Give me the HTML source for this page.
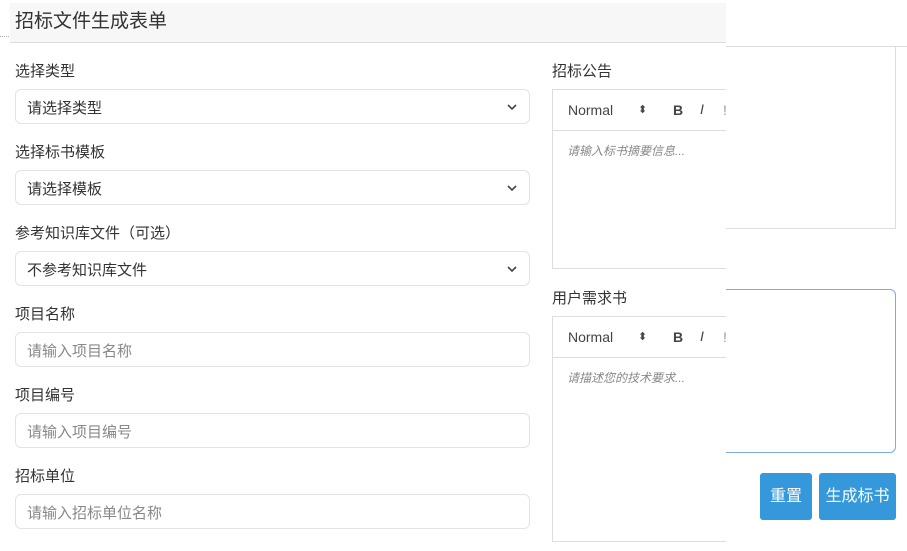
<!DOCTYPE html>
<html><head><meta charset="utf-8"><style>
*{box-sizing:border-box;margin:0;padding:0}
body{width:907px;height:551px;background:#fff;position:relative;overflow:hidden;font-family:"Liberation Sans","Noto Sans CJK SC",sans-serif;color:#333}
.abs{position:absolute}
.hdr{left:10px;top:3px;width:716px;height:40px;background:#f7f7f7;border-bottom:1px solid #ddd;font-size:19px;padding:3px 0 0 5px;color:#333}
.lbl{font-size:15px;color:#333}
.fld{left:15px;width:515px;height:35px;border:1px solid #e3e3e3;border-radius:6px;font-size:15px;padding:7px 11px;color:#333}
.fld.ph{color:#888}
.chev{position:absolute;right:12px;top:13px;width:10px;height:8px}
.ed{left:552px;width:174px;border:1px solid #ddd;border-right:none}
.tb{height:41px;border-bottom:1px solid #ddd;position:relative;font-size:14px;color:#444}
.tb span{position:absolute;top:12px}
.ph2{font-size:12px;font-style:italic;color:#888;padding:11px 14px}
.btn{background:#3498db;color:#fff;font-size:16px;border-radius:3px;text-align:center;line-height:47px;height:47px;top:473px}
</style></head><body>
<div class="abs" style="left:0;top:36px;width:9px;border-top:1px dotted #aaa"></div>
<div class="abs hdr">招标文件生成表单</div>
<div class="abs" style="left:726px;top:46px;width:181px;border-top:1px solid #ddd"></div>
<div class="abs" style="left:726px;top:46px;width:170px;height:183px;border-right:1px solid #ddd;border-bottom:1px solid #ddd"></div>
<div class="abs" style="left:726px;top:289px;width:170px;height:164px;border:1px solid #7fa9ea;border-left:none;border-radius:0 6px 6px 0"></div>

<div class="abs lbl" style="left:15px;top:60px">选择类型</div>
<div class="abs fld" style="top:89px">请选择类型<svg class="chev" viewBox="0 0 10 8"><path d="M1 2l4 4 4-4" fill="none" stroke="#444" stroke-width="1.6"/></svg></div>
<div class="abs lbl" style="left:15px;top:141px">选择标书模板</div>
<div class="abs fld" style="top:170px">请选择模板<svg class="chev" viewBox="0 0 10 8"><path d="M1 2l4 4 4-4" fill="none" stroke="#444" stroke-width="1.6"/></svg></div>
<div class="abs lbl" style="left:15px;top:222px">参考知识库文件（可选）</div>
<div class="abs fld" style="top:251px">不参考知识库文件<svg class="chev" viewBox="0 0 10 8"><path d="M1 2l4 4 4-4" fill="none" stroke="#444" stroke-width="1.6"/></svg></div>
<div class="abs lbl" style="left:15px;top:303px">项目名称</div>
<div class="abs fld ph" style="top:332px">请输入项目名称</div>
<div class="abs lbl" style="left:15px;top:384px">项目编号</div>
<div class="abs fld ph" style="top:413px">请输入项目编号</div>
<div class="abs lbl" style="left:15px;top:465px">招标单位</div>
<div class="abs fld ph" style="top:494px">请输入招标单位名称</div>

<div class="abs lbl" style="left:552px;top:60px">招标公告</div>
<div class="abs ed" style="top:89px;height:180px"><div class="tb"><span style="left:15px">Normal</span><span style="left:85px;font-size:11px;top:13px">⬍</span><span style="left:120px;font-weight:bold">B</span><span style="left:147px;font-style:italic;top:11px">I</span><span style="left:170px;color:#999">!</span></div><div class="ph2">请输入标书摘要信息...</div></div>

<div class="abs lbl" style="left:552px;top:287px">用户需求书</div>
<div class="abs ed" style="top:316px;height:226px"><div class="tb"><span style="left:15px">Normal</span><span style="left:85px;font-size:11px;top:13px">⬍</span><span style="left:120px;font-weight:bold">B</span><span style="left:147px;font-style:italic;top:11px">I</span><span style="left:170px;color:#999">!</span></div><div class="ph2">请描述您的技术要求...</div></div>

<div class="abs btn" style="left:760px;width:52px">重置</div>
<div class="abs btn" style="left:819px;width:77px">生成标书</div>
</body></html>
